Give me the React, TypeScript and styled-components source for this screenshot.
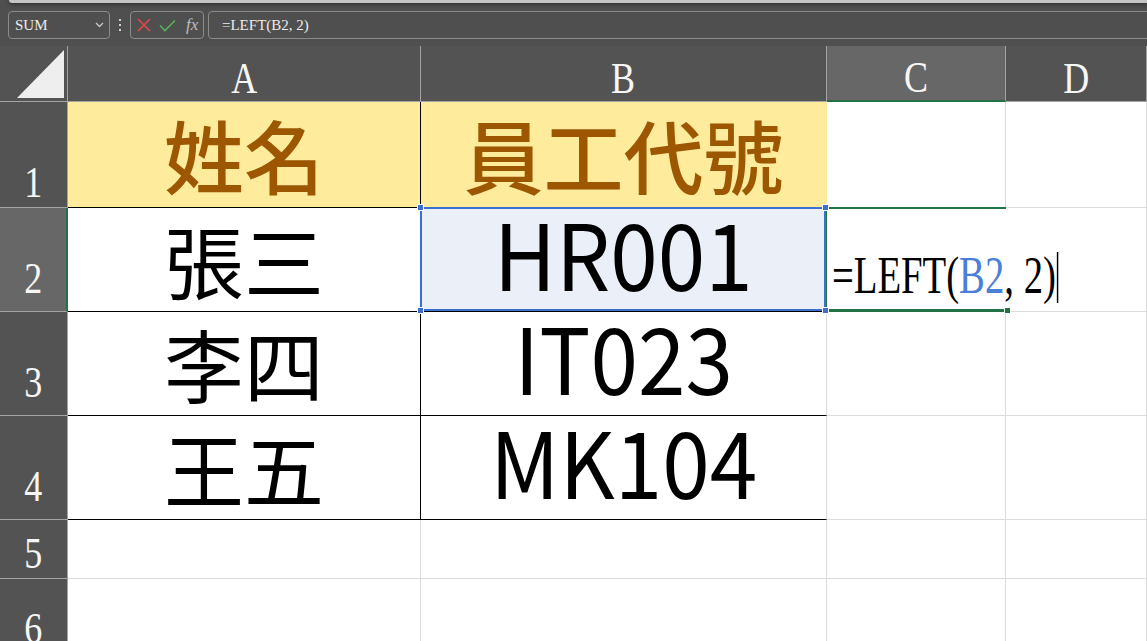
import styled, { createGlobalStyle } from "styled-components";

const GlobalStyle = createGlobalStyle`
  html, body {
    margin: 0;
    padding: 0;
    background: #4f4f4f;
    overflow: hidden;
  }
`;

const GRID = "#dcdcdc";
const BLACK = "#000";
const YELLOW = "#ffeb9c";
const BROWN = "#9c5700";
const GREEN = "#217346";
const BLUE = "#3b6fd1";

const Page = styled.div`
  width: 1147px;
  height: 641px;
  overflow: hidden;
  display: flex;
  flex-direction: column;
  background: #4f4f4f;
  & > * {
    flex-shrink: 0;
  }
`;

const TopStrip = styled.div`
  height: 3px;
  margin-left: 9px;
  background: #c4c4c4;
  border-bottom-left-radius: 6px;
  box-shadow: 0 1px 4px rgba(0, 0, 0, 0.6);
`;

const Toolbar = styled.div`
  display: flex;
  align-items: stretch;
  height: 28px;
  margin-top: 8px;
  padding-left: 8px;
  font-family: "Liberation Serif", serif;
  font-size: 15px;
  color: #ececec;
`;

const Box = styled.div`
  box-sizing: border-box;
  border: 1px solid #8b8b8b;
  border-radius: 4px;
  display: flex;
  align-items: center;
`;

const NameBox = styled(Box)`
  width: 102px;
  padding: 0 5px 0 6px;
  justify-content: space-between;
`;

const Dots = styled.div`
  width: 20px;
  display: flex;
  flex-direction: column;
  align-items: center;
  justify-content: center;
  gap: 3px;
  span {
    width: 2px;
    height: 2px;
    background: #cfcfcf;
  }
`;

const ActionBox = styled(Box)`
  width: 74px;
  padding-left: 6px;
  gap: 8px;
`;

const Fx = styled.span`
  margin-left: 2px;
  font-style: italic;
  font-size: 17px;
  color: #bdbdbd;
`;

const FormulaBox = styled(Box)`
  flex: 1;
  margin-left: 4px;
  margin-right: -20px;
  padding-left: 13px;
`;

const Sheet = styled.div`
  margin-top: 7px;
  display: grid;
  grid-template-columns: 68px 353px 406px 179px 1fr;
  grid-template-rows: 56px 106px 104px 104px 104px 59px 104px;
  background: #fff;
`;

const HeadBase = styled.div<{ $selected?: boolean }>`
  box-sizing: border-box;
  background: ${(p) => (p.$selected ? "#676767" : "#535353")};
  border-right: 1px solid #a4a4a4;
  border-bottom: 1px solid #a4a4a4;
  display: flex;
  justify-content: center;
  align-items: flex-end;
  font-family: "Liberation Serif", serif;
  font-size: 45px;
  line-height: 1;
  color: #f6f6f6;
`;

const Corner = styled(HeadBase)`
  display: block;
`;

const ColHeader = styled(HeadBase)`
  ${(p) => (p.$selected ? `border-bottom: 2px solid ${GREEN};` : "")}
`;

const RowHeader = styled(HeadBase)<{ $pad: number }>`
  padding-bottom: ${(p) => p.$pad}px;
  ${(p) => (p.$selected ? `border-right: 2px solid ${GREEN};` : "")}
`;

const Label = styled.span`
  display: inline-block;
  transform: scaleX(0.8);
`;

const Cell = styled.div<{ $fill?: string; $right?: string; $bottom?: string }>`
  position: relative;
  box-sizing: border-box;
  background: ${(p) => p.$fill ?? "#fff"};
  border-right: 1px solid ${(p) => p.$right ?? GRID};
  border-bottom: 1px solid ${(p) => p.$bottom ?? GRID};
  display: flex;
  justify-content: center;
  align-items: center;
`;

const CellText = styled.span<{
  $size: number;
  $color?: string;
  $weight?: number;
  $lift?: number;
  $squeeze?: number;
}>`
  display: inline-block;
  font-family: "Noto Sans CJK TC", "Noto Sans", sans-serif;
  font-size: ${(p) => p.$size}px;
  font-weight: ${(p) => p.$weight ?? 400};
  color: ${(p) => p.$color ?? "#000"};
  line-height: 1;
  padding-bottom: ${(p) => p.$lift ?? 0}px;
  white-space: nowrap;
  transform: scaleX(${(p) => p.$squeeze ?? 1});
`;

const RefFrame = styled.div`
  position: absolute;
  top: -1px;
  left: -1px;
  right: 0;
  bottom: 0;
  border: 2px solid ${BLUE};
  z-index: 3;
  pointer-events: none;
`;

const Handle = styled.span<{ $x: "left" | "right"; $y: "top" | "bottom"; $color: string }>`
  position: absolute;
  width: 5px;
  height: 5px;
  background: ${(p) => p.$color};
  outline: 1px solid #fff;
  ${(p) => p.$x}: -4px;
  ${(p) => p.$y}: -4px;
`;

const EditCell = styled(Cell)`
  justify-content: flex-start;
  align-items: flex-end;
  padding: 0 0 9px 5px;
  overflow: visible;
`;

const EditFrame = styled.div`
  position: absolute;
  top: -1px;
  left: -2px;
  right: -1px;
  bottom: 0;
  border: 2px solid ${GREEN};
  border-right: none;
  z-index: 2;
  pointer-events: none;
`;

const EditText = styled.span`
  display: inline-block;
  position: relative;
  z-index: 4;
  font-family: "Liberation Serif", serif;
  font-size: 53px;
  line-height: 1;
  color: #000;
  white-space: nowrap;
  transform: scaleX(0.73);
  transform-origin: left bottom;
  &::after {
    content: "";
    position: absolute;
    right: -3px;
    bottom: -1px;
    width: 1.5px;
    height: 51px;
    background: #000;
  }
`;

const Ref = styled.span`
  color: #4a7fd8;
`;

const CancelIcon = () => (
  <svg width="14" height="14" viewBox="0 0 14 14">
    <path d="M1 1L13 13M13 1L1 13" stroke="#e2474c" strokeWidth="1.6" fill="none" />
  </svg>
);

const EnterIcon = () => (
  <svg width="17" height="13" viewBox="0 0 17 13">
    <path d="M1 6.5L6 11.5L16 1.5" stroke="#52b35a" strokeWidth="1.6" fill="none" />
  </svg>
);

const Chevron = () => (
  <svg width="9" height="6" viewBox="0 0 9 6">
    <path d="M1 1L4.5 4.5L8 1" stroke="#c8c8c8" strokeWidth="1.3" fill="none" />
  </svg>
);

const CornerMark = () => (
  <svg width="67" height="55" viewBox="0 0 67 55">
    <polygon points="17,52 64,52 64,4" fill="#eeeeee" />
  </svg>
);

type Data = {
  text?: string;
  latin?: boolean;
  head?: boolean;
  fill?: string;
  right?: string;
  bottom?: string;
  ref?: boolean;
};

const rows: { label: string; pad: number; selected?: boolean; cells: Data[] }[] = [
  {
    label: "1",
    pad: 2,
    cells: [
      { text: "姓名", head: true, fill: YELLOW, right: BLACK, bottom: BLACK },
      { text: "員工代號", head: true, fill: YELLOW, right: YELLOW, bottom: BLACK },
      { bottom: GREEN },
      {},
    ],
  },
  {
    label: "2",
    pad: 10,
    selected: true,
    cells: [
      { text: "張三", right: BLACK, bottom: BLACK },
      { text: "HR001", latin: true, fill: "#eaeff8", bottom: BLACK, ref: true },
      {},
      {},
    ],
  },
  {
    label: "3",
    pad: 10,
    cells: [
      { text: "李四", right: BLACK, bottom: BLACK },
      { text: "IT023", latin: true, bottom: BLACK },
      {},
      {},
    ],
  },
  {
    label: "4",
    pad: 10,
    cells: [
      { text: "王五", right: BLACK, bottom: BLACK },
      { text: "MK104", latin: true, bottom: BLACK },
      {},
      {},
    ],
  },
  { label: "5", pad: 2, cells: [{}, {}, {}, {}] },
  { label: "6", pad: 31, cells: [{}, {}, {}, {}] },
];

const columns = ["A", "B", "C", "D"];

function DataCell({ d }: { d: Data }) {
  return (
    <Cell $fill={d.fill} $right={d.right} $bottom={d.bottom}>
      {d.text && (
        <CellText
          $size={d.latin ? 92 : 80}
          $color={d.head ? BROWN : undefined}
          $weight={d.head ? 500 : 400}
          $lift={d.latin ? 18 : 4}
          $squeeze={d.latin ? 0.93 : 1}
        >
          {d.text}
        </CellText>
      )}
      {d.ref && (
        <RefFrame>
          <Handle $x="left" $y="top" $color={BLUE} />
          <Handle $x="right" $y="top" $color={BLUE} />
          <Handle $x="left" $y="bottom" $color={BLUE} />
          <Handle $x="right" $y="bottom" $color={BLUE} />
        </RefFrame>
      )}
    </Cell>
  );
}

export default function App() {
  return (
    <Page>
      <GlobalStyle />
      <TopStrip />
      <Toolbar>
        <NameBox>
          <span>SUM</span>
          <Chevron />
        </NameBox>
        <Dots>
          <span />
          <span />
          <span />
        </Dots>
        <ActionBox>
          <CancelIcon />
          <EnterIcon />
          <Fx>fx</Fx>
        </ActionBox>
        <FormulaBox>=LEFT(B2, 2)</FormulaBox>
      </Toolbar>

      <Sheet>
        <Corner>
          <CornerMark />
        </Corner>
        {columns.map((c) => (
          <ColHeader key={c} $selected={c === "C"}>
            <Label>{c}</Label>
          </ColHeader>
        ))}

        {rows.map((r) => [
          <RowHeader key={"h" + r.label} $pad={r.pad} $selected={r.selected}>
            <Label>{r.label}</Label>
          </RowHeader>,
          ...r.cells.map((d, i) =>
            r.label === "2" && i === 2 ? (
              <EditCell key={r.label + i} $right="#fff" $bottom={GREEN}>
                <EditText>
                  =LEFT(<Ref>B2</Ref>, 2)
                </EditText>
                <EditFrame>
                  <Handle $x="right" $y="bottom" $color={GREEN} />
                </EditFrame>
              </EditCell>
            ) : (
              <DataCell key={r.label + i} d={d} />
            )
          ),
        ])}
      </Sheet>
    </Page>
  );
}
